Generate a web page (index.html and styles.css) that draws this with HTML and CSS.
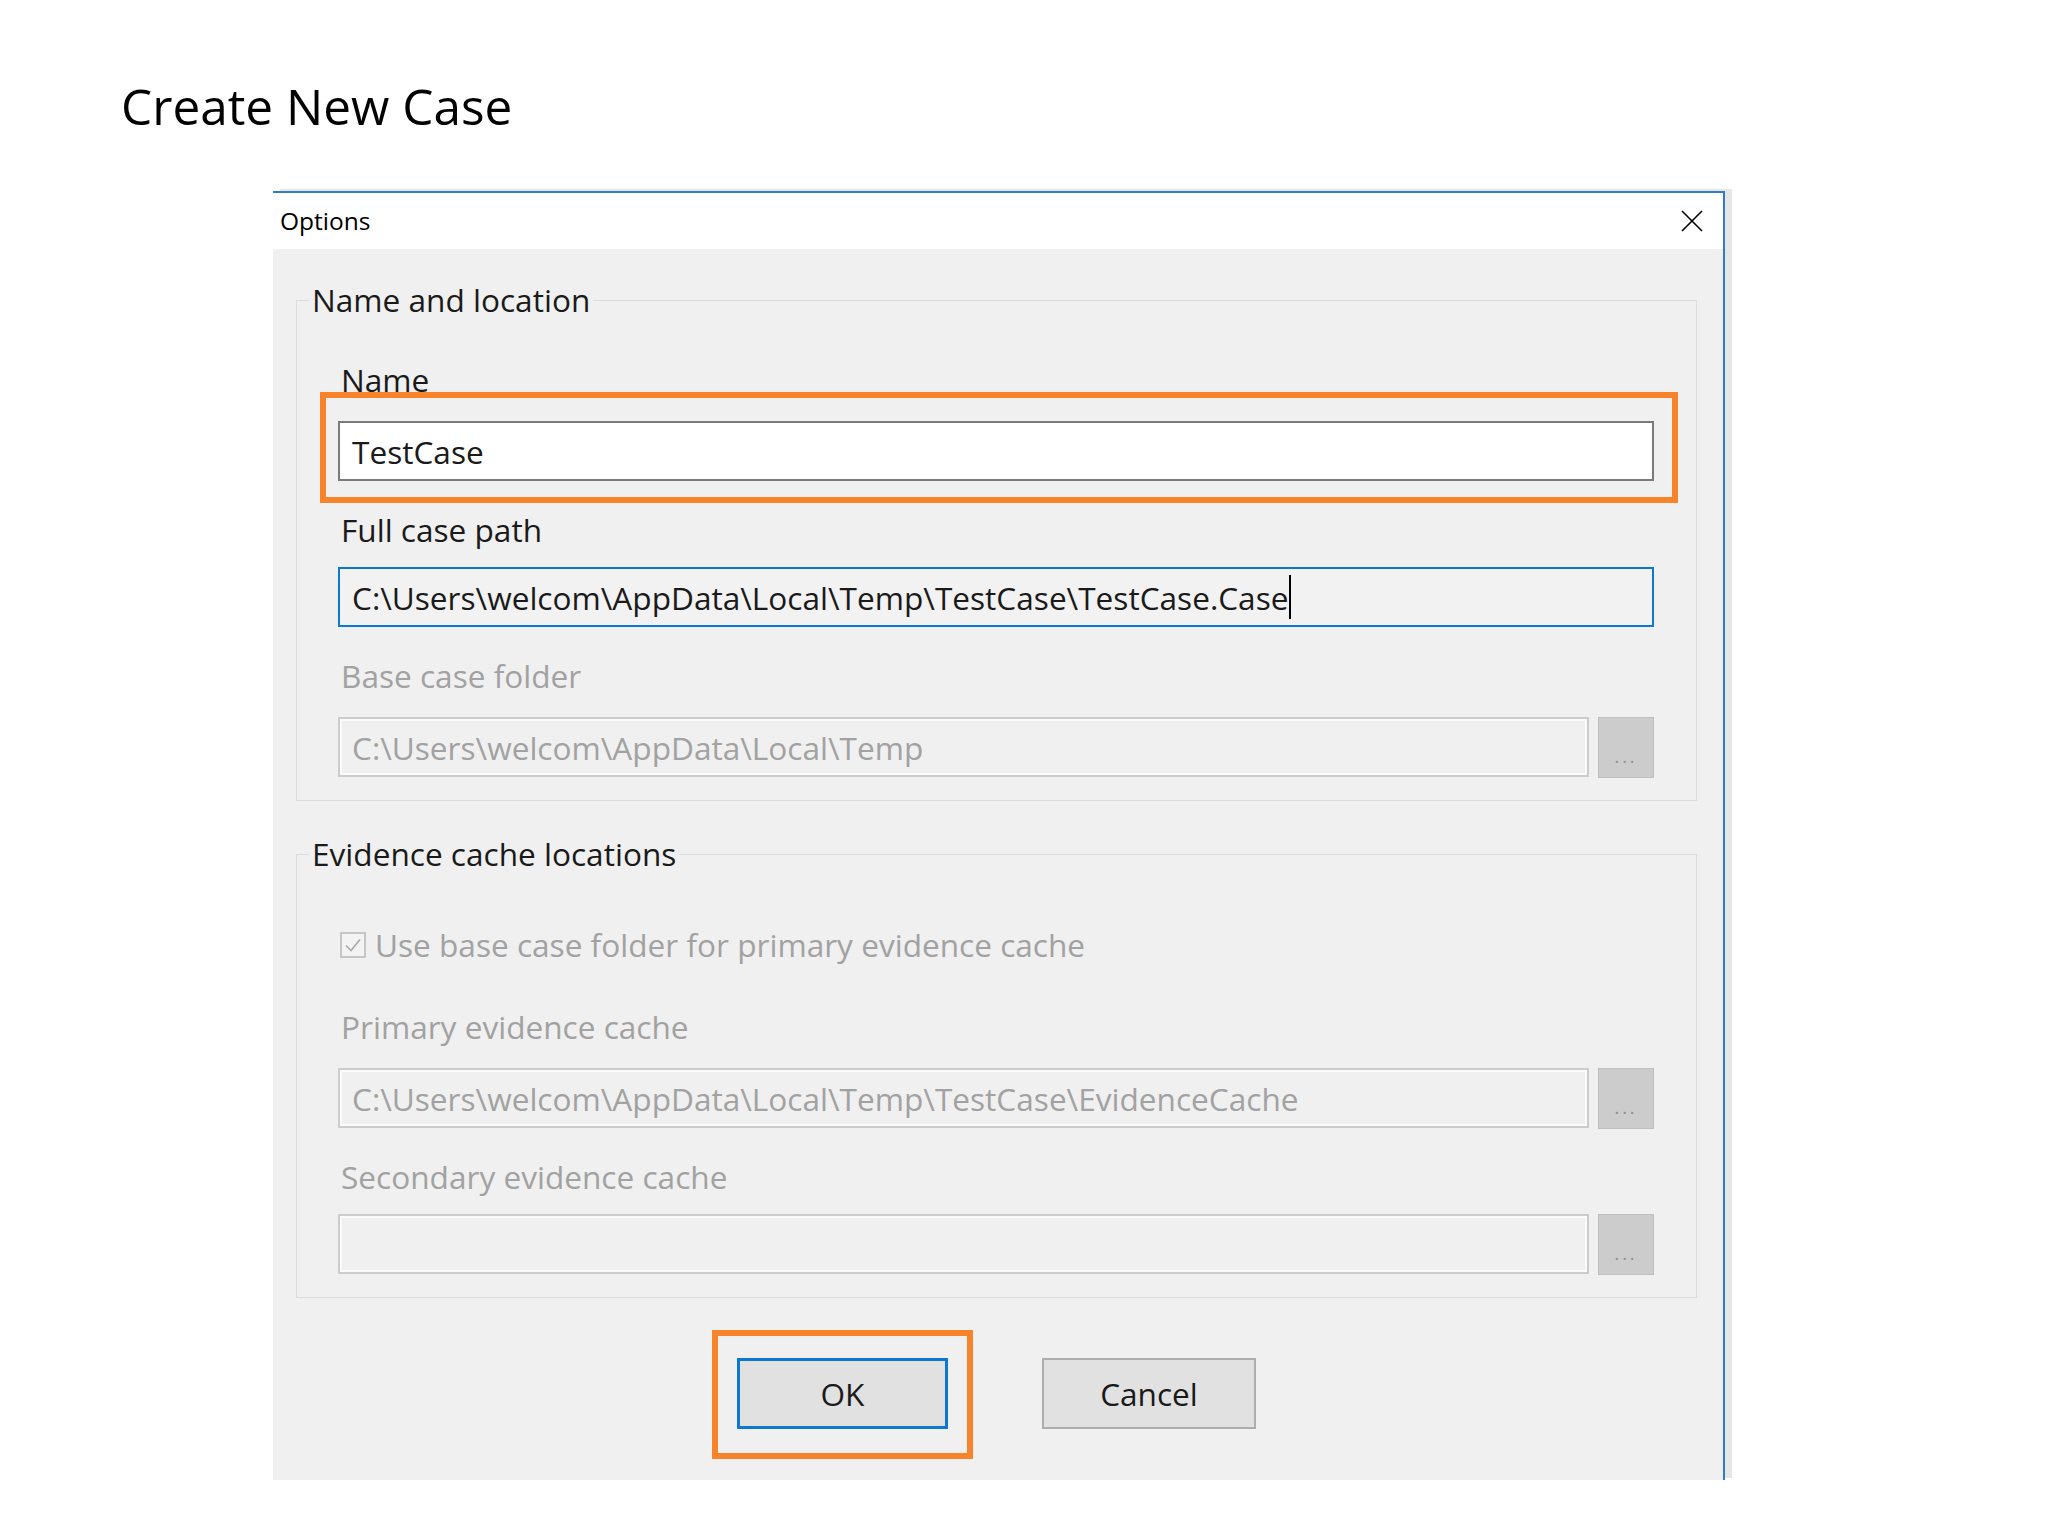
FILE: index.html
```html
<!DOCTYPE html>
<html lang="en">
<head>
<meta charset="utf-8">
<title>Create New Case</title>
<link rel="stylesheet" href="styles.css">
</head>
<body>
<div class="page">
  <h1 class="slide-title">Create New Case</h1>

  <div class="dialog">
    <div class="titlebar">
      <span class="title">Options</span>
      <span class="close" aria-label="Close">
        <svg width="22" height="22" viewBox="0 0 22 22"><path d="M1 1L21 21M21 1L1 21" stroke="#000" stroke-width="1.6" fill="none"/></svg>
      </span>
    </div>

    <div class="dialog-body">
      <div class="group">
        <div class="group-title">Name and location</div>

        <div class="field first">
          <div class="label">Name</div>
          <div class="hl-wrap">
            <div class="textbox">TestCase</div>
            <div class="highlight hl-name"></div>
          </div>
        </div>

        <div class="field path-field">
          <div class="label">Full case path</div>
          <div class="textbox focused">C:\Users\welcom\AppData\Local\Temp\TestCase\TestCase.Case<span class="caret"></span></div>
        </div>

        <div class="field base-field">
          <div class="label disabled-text">Base case folder</div>
          <div class="row">
            <div class="textbox disabled">C:\Users\welcom\AppData\Local\Temp</div>
            <div class="browse">...</div>
          </div>
        </div>
      </div>

      <div class="group second">
        <div class="group-title">Evidence cache locations</div>

        <div class="check-row">
          <span class="checkbox">
            <svg width="20" height="20" viewBox="0 0 20 20"><path d="M3 10.5L8 15.5L17 4.5" stroke="#a9a9a9" stroke-width="1.6" fill="none"/></svg>
          </span>
          <span class="check-label">Use base case folder for primary evidence cache</span>
        </div>

        <div class="field after-check">
          <div class="label disabled-text">Primary evidence cache</div>
          <div class="row">
            <div class="textbox disabled">C:\Users\welcom\AppData\Local\Temp\TestCase\EvidenceCache</div>
            <div class="browse">...</div>
          </div>
        </div>

        <div class="field secondary-field">
          <div class="label disabled-text">Secondary evidence cache</div>
          <div class="row">
            <div class="textbox disabled"></div>
            <div class="browse">...</div>
          </div>
        </div>
      </div>

      <div class="buttons">
        <div class="hl-wrap">
          <div class="btn ok">OK</div>
          <div class="highlight hl-ok"></div>
        </div>
        <div class="btn cancel">Cancel</div>
      </div>
    </div>
  </div>
</div>
</body>
</html>
```

FILE: styles.css
```css
* { box-sizing: border-box; }

body {
  margin: 0;
  background: #ffffff;
  font-family: "Open Sans", "Noto Sans", sans-serif;
  color: #000;
}

.page {
  padding: 76px 0 0 121px;
}

.slide-title {
  margin: 0;
  font-size: 49.5px;
  font-weight: 400;
  line-height: 60px;
  color: #000;
}

.dialog {
  margin: 55px 0 0 152px;
  width: 1452px;
  background: #f0f0f0;
  border-top: 2px solid #2f7cc8;
  border-right: 2px solid #2f7cc8;
  box-shadow: 7px -2px 0 #e6e6e6;
}

.titlebar {
  height: 56px;
  background: #ffffff;
  display: flex;
  align-items: center;
  justify-content: space-between;
  padding: 0 20px 0 7px;
}

.titlebar .title {
  font-size: 24.5px;
  line-height: 30px;
  color: #000;
}

.close {
  display: flex;
  width: 22px;
  height: 22px;
}

.dialog-body {
  padding: 51px 26px 51px 23px;
}

.group {
  border: 1px solid #dcdcdc;
  padding: 0 42px 22px 41px;
}

.group.second {
  margin-top: 53px;
}

.group-title {
  width: fit-content;
  margin: -21px 0 0 -29px;
  padding: 0 3px;
  background: #f0f0f0;
  font-size: 31.6px;
  line-height: 40px;
  color: #1a1a1a;
}

.field.first {
  margin-top: 40px;
}

.field.path-field {
  margin-top: 29px;
}

.field.path-field .label {
  margin-bottom: 17px;
}

.field.base-field {
  margin-top: 29px;
}

.field.after-check {
  margin-top: 42px;
}

.field.secondary-field {
  margin-top: 28px;
}

.field.secondary-field .label {
  margin-bottom: 17px;
}

.label {
  font-size: 31.6px;
  line-height: 40px;
  margin: 0 0 21px 3px;
  color: #1a1a1a;
}

.disabled-text {
  color: #a2a2a2;
}

.textbox {
  height: 60px;
  border: 2px solid #7a7a7a;
  background: #ffffff;
  padding-left: 12px;
  font-size: 31.6px;
  display: flex;
  align-items: center;
  white-space: nowrap;
  overflow: hidden;
  color: #1a1a1a;
}

.textbox.focused {
  border-color: #0a78d4;
  background: #f2f2f2;
}

.textbox.disabled {
  border-color: #cccccc;
  background: #f0f0f0;
  box-shadow: inset 0 0 0 2px #fbfbfb;
  color: #a2a2a2;
}

.caret {
  display: inline-block;
  width: 2px;
  height: 44px;
  background: #000;
  margin-left: 1px;
}

.row {
  display: flex;
  gap: 9px;
}

.row .textbox {
  flex: 1;
}

.browse {
  width: 56px;
  height: 61px;
  background: #cccccc;
  border: 1px solid #bebebe;
  display: flex;
  justify-content: center;
  align-items: center;
  padding-top: 17px;
  font-size: 18px;
  line-height: 20px;
  letter-spacing: 3px;
  color: #8e8e8e;
}

.check-row {
  display: flex;
  align-items: center;
  gap: 9px;
  margin: 51px 0 0 2px;
  font-size: 31.6px;
  line-height: 40px;
  color: #a2a2a2;
}

.checkbox {
  width: 26px;
  height: 26px;
  border: 2px solid #c6c6c6;
  background: #f3f3f3;
  display: flex;
  align-items: center;
  justify-content: center;
}

.buttons {
  display: flex;
  justify-content: center;
  gap: 94px;
  margin-top: 60px;
}

.btn {
  height: 71px;
  background: #e1e1e1;
  border: 2px solid #adadad;
  font-size: 31.6px;
  display: flex;
  align-items: center;
  justify-content: center;
  color: #1a1a1a;
}

.btn.ok {
  width: 211px;
  border: 3px solid #0a78d4;
}

.btn.cancel {
  width: 214px;
}

.hl-wrap {
  position: relative;
}

.highlight {
  position: absolute;
  border: 6px solid #f7832a;
  pointer-events: none;
}

.hl-name {
  top: -29px;
  left: -18px;
  right: -24px;
  bottom: -22px;
}

.hl-ok {
  top: -28px;
  left: -25px;
  right: -25px;
  bottom: -30px;
}
```
